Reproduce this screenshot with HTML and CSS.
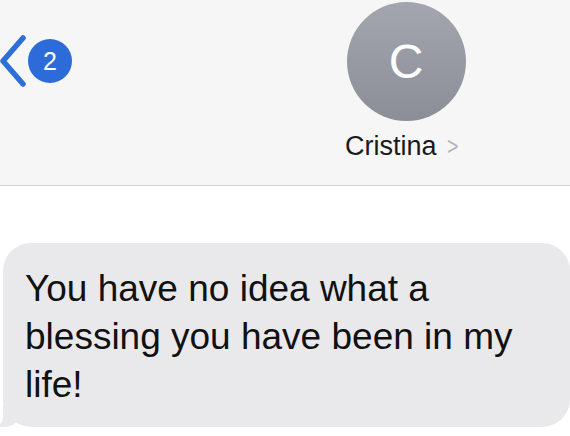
FILE: index.html
```html
<!DOCTYPE html>
<html>
<head>
<meta charset="utf-8">
<link rel="stylesheet" href="styles.css">
</head>
<body>
<header class="header">
  <div class="back">
    <svg class="chev" width="27" height="54" viewBox="0 0 27 54"><path d="M23 4 L3 27 L23 50" fill="none" stroke="#2c6fd9" stroke-width="5.5" stroke-linecap="round" stroke-linejoin="round"/></svg>
    <span class="badge">2</span>
  </div>
  <div class="contact">
    <div class="avatar">C</div>
    <div class="name">Cristina <span class="more">&gt;</span></div>
  </div>
</header>
<main class="thread">
  <div class="bubble">You have no idea what a blessing you have been in my life!</div>
</main>
</body>
</html>
```
FILE: styles.css
```css
html, body { margin: 0; padding: 0; }
body {
  width: 570px;
  height: 436px;
  overflow: hidden;
  background: #ffffff;
  font-family: "Liberation Sans", Arial, sans-serif;
}
.header {
  height: 186px;
  background: #f6f6f6;
  border-bottom: 1px solid #d2d2d4;
  display: flex;
  align-items: flex-start;
  box-sizing: border-box;
}
.back {
  display: flex;
  align-items: center;
  padding-top: 34px;
}
.chev { display: block; }
.badge {
  width: 44px;
  height: 44px;
  border-radius: 50%;
  background: #2d6cd8;
  color: #fff;
  font-size: 25px;
  display: flex;
  align-items: center;
  justify-content: center;
  margin-left: 1px;
}
.contact {
  margin-left: 264px;
  width: 140px;
  display: flex;
  flex-direction: column;
  align-items: center;
  padding-top: 2px;
}
.avatar {
  width: 119px;
  height: 119px;
  border-radius: 50%;
  background: linear-gradient(#a3a6ae, #8b8e97);
  color: #fff;
  font-size: 48px;
  display: flex;
  align-items: center;
  justify-content: center;
}
.name {
  margin-top: 10px;
  font-size: 27px;
  color: #1a1a1a;
  margin-left: -7px;
  white-space: nowrap;
}
.more {
  color: #b4b4b9;
  font-size: 26px;
  margin-left: 1px;
  display: inline-block;
  transform: scaleX(0.75);
}
.thread {
  padding-top: 57px;
  padding-left: 3px;
}
.bubble {
  position: relative;
  width: 567px;
  box-sizing: border-box;
  background: #e9e9eb;
  border-radius: 28px;
  padding: 22px 20px 18px 22px;
  font-size: 37px;
  line-height: 48px;
  color: #111;
}
.bubble::before {
  content: "";
  position: absolute;
  left: -3px;
  bottom: 0;
  width: 20px;
  height: 22px;
  background: #e9e9eb;
  border-bottom-right-radius: 16px 14px;
}
.bubble::after {
  content: "";
  position: absolute;
  left: -10px;
  bottom: 0;
  width: 10px;
  height: 24px;
  background: #ffffff;
  border-bottom-right-radius: 10px;
}
```
